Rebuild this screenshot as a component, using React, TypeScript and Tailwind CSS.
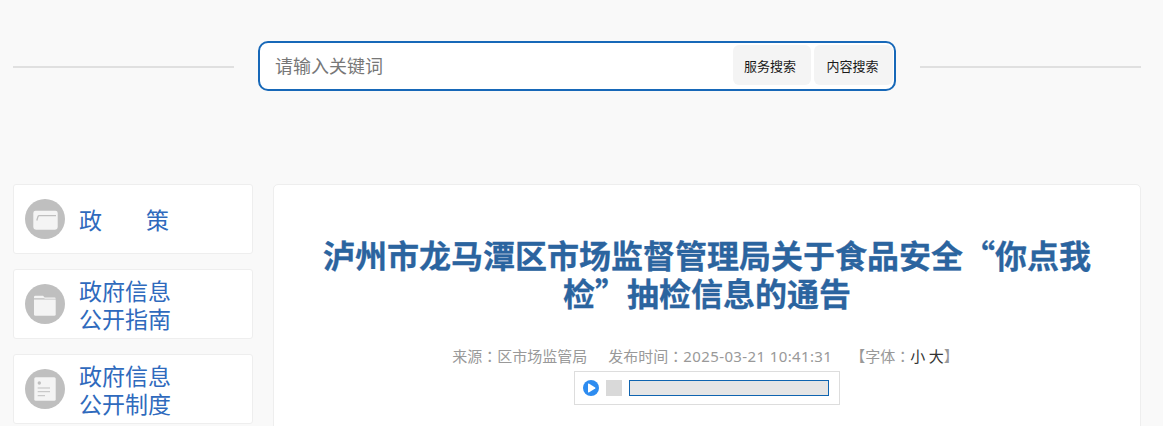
const font = "font-['Noto_Sans_CJK_SC','Liberation_Sans',sans-serif]";

function OpenFolderIcon() {
  return (
    <svg viewBox="0 0 40 40" className="w-10 h-10 shrink-0">
      <circle cx="20" cy="20" r="20" fill="#bfbfbf" />
      <path d="M8.300 14 Q8.300 11.700 10.500 11.700 L30.500 11.700 Q32.700 11.700 32.700 14 L32.700 27.500 Q32.700 30.700 29.500 30.700 L11.500 30.700 Q8.300 30.700 8.300 27.500 Z" fill="#f4f4f4" />
      <path d="M11.800 21.500 L13 17.500 Q13.300 16.700 14.200 16.700 L31 16.700" fill="none" stroke="#bfbfbf" strokeWidth="1.300" />
    </svg>
  );
}

function FolderIcon() {
  return (
    <svg viewBox="0 0 40 40" className="w-10 h-10 shrink-0">
      <circle cx="20" cy="20" r="20" fill="#bfbfbf" />
      <path d="M9 13 Q9 11.700 10.300 11.700 L18 11.700 L20.300 14.300 L9 14.300 Z" fill="#f4f4f4" />
      <path d="M19.500 13.500 L29.500 13.500 Q30.700 13.500 30.700 14.700 L30.700 14.800 L19.500 14.800 Z" fill="#f4f4f4" />
      <path d="M9 15.500 L30.700 15.500 L30.700 30.200 Q30.700 31.700 29.200 31.700 L10.500 31.700 Q9 31.700 9 30.200 Z" fill="#f4f4f4" />
    </svg>
  );
}

function DocIcon() {
  return (
    <svg viewBox="0 0 40 40" className="w-10 h-10 shrink-0">
      <circle cx="20" cy="20" r="20" fill="#bfbfbf" />
      <rect x="9.300" y="8.300" width="21.400" height="23.400" rx="1.500" fill="#f4f4f4" />
      <circle cx="14.300" cy="14" r="1.700" fill="#bfbfbf" />
      <path d="M12.700 19 H25 M12.700 22.700 H25 M12.700 26.700 H20" stroke="#bfbfbf" strokeWidth="1" fill="none" />
    </svg>
  );
}

function Colon() {
  return <span className="font-['Noto_Sans_CJK_TC',sans-serif]">：</span>;
}

function SideCard({ icon, children }: { icon: React.ReactNode; children: React.ReactNode }) {
  return (
    <div className="h-[70px] bg-white border border-[#eeeeee] rounded-[3px] flex items-center pl-[11px] gap-[14px]">
      {icon}
      <div className="w-[92px] text-[23px] leading-[28px] text-[#2f6abd]">{children}</div>
    </div>
  );
}

export default function App() {
  return (
    <div className={`w-[1163px] h-[426px] overflow-hidden bg-[#f9f9f9] ${font}`}>
      <div className="h-[184px] pt-[41px] pl-[13px] flex items-start">
        <div className="w-[221px] h-[2px] bg-[#e0e0e0] mt-[25px]" />
        <div className="ml-[24px] w-[638px] h-[50px] bg-white border-2 border-[#1768b8] rounded-[10px] flex items-center pl-[15px] pr-[1px]">
          <span className="text-[18px] pb-[2px] text-[#777777] flex-1">请输入关键词</span>
          <div className="w-[78px] h-[40px] mb-[2px] pr-[4px] pt-[2px] bg-[#f4f4f4] rounded-[6px] text-[13px] text-[#1a1a1a] flex items-center justify-center">服务搜索</div>
          <div className="w-[79px] h-[40px] mb-[2px] ml-[3px] pr-[2px] pt-[2px] bg-[#f4f4f4] rounded-[6px] text-[13px] text-[#1a1a1a] flex items-center justify-center">内容搜索</div>
        </div>
        <div className="ml-[24px] w-[221px] h-[2px] bg-[#e0e0e0] mt-[25px]" />
      </div>
      <div className="flex pl-[13px] gap-[20px]">
        <div className="w-[240px] flex flex-col gap-[15px]">
          <SideCard icon={<OpenFolderIcon />}>
            <span className="w-[90px] flex justify-between">
              <span>政</span>
              <span>策</span>
            </span>
          </SideCard>
          <SideCard icon={<FolderIcon />}>政府信息<br />公开指南</SideCard>
          <SideCard icon={<DocIcon />}>政府信息<br />公开制度</SideCard>
        </div>
        <div className="w-[868px] h-[300px] bg-white border border-[#eeeeee] rounded-[5px] pt-[50px] px-[40px]">
          <h1 className="text-[32px] leading-[38px] font-bold text-[#2b649f] text-center [-webkit-text-stroke:0.3px_#2b649f]">
            泸州市龙马潭区市场监督管理局关于食品安全“你点我检”抽检信息的通告
          </h1>
          <div className="mt-[34px] pr-[3px] text-[15px] leading-[22px] text-[#999999] flex justify-center">
            <span>来源<Colon />区市场监管局</span>
            <span className="ml-[21px]">
              发布时间<Colon />
              <span className="font-['Noto_Sans',sans-serif] tracking-[0.38px]">2025-03-21 10:41:31</span>
            </span>
            <span className="ml-[18px]">【字体<Colon /><span className="text-[#333333]">小 大</span>】</span>
          </div>
          <div className="mt-[4px] mx-auto w-[266px] h-[34px] border border-[#dddddd] flex items-center pl-[8px]">
            <svg viewBox="0 0 16 16" className="w-4 h-4">
              <circle cx="8" cy="8" r="8" fill="#2d8cf0" />
              <path d="M5 4 Q5 3.300 5.800 3.600 L12.200 7.400 Q12.800 8 12.200 8.600 L5.800 12.400 Q5 12.700 5 12 Z" fill="#ffffff" />
            </svg>
            <div className="w-4 h-4 bg-[#d9d9d9] ml-[7px]" />
            <div className="w-[200px] h-4 ml-[7px] bg-[#e5e5e5] border border-[#0f64b0]" />
          </div>
        </div>
      </div>
    </div>
  );
}
